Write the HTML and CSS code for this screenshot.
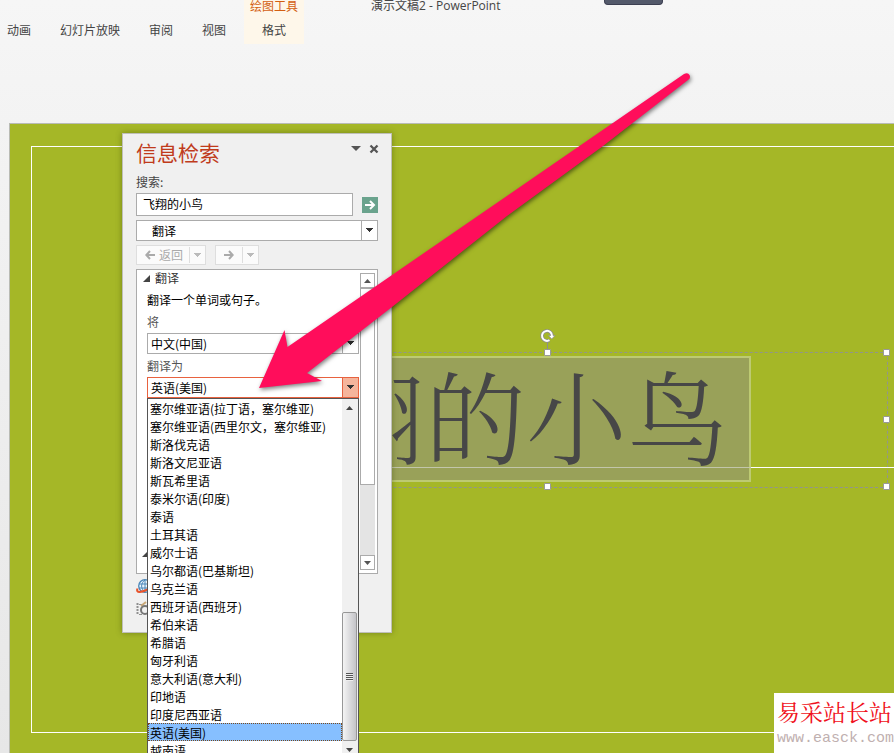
FILE: index.html
```html
<!DOCTYPE html>
<html lang="zh-CN">
<head>
<meta charset="utf-8">
<title>演示文稿2 - PowerPoint</title>
<link rel="stylesheet" href="styles.css">
</head>
<body>
<div class="app">
  <header class="ribbon">
    <nav class="tabs">
      <a href="#animations">动画</a>
      <a href="#slideshow">幻灯片放映</a>
      <a href="#review">审阅</a>
      <a href="#view">视图</a>
    </nav>
    <div class="context-tabs">
      <span class="context-title">绘图工具</span>
      <a href="#format">格式</a>
    </div>
    <div class="window-title">演示文稿2 - PowerPoint</div>
    <div class="window-grip"></div>
  </header>

  <main class="workspace">
    <section class="slide">
      <div class="slide-frame"></div>
      <div class="text-box">
        <div class="text-shape">飞翔的小鸟</div>
        <div class="rule"></div>
        <i class="handle top"></i><i class="handle corner-top"></i><i class="handle side"></i>
        <i class="handle corner-bottom"></i><i class="handle bottom"></i>
        <svg class="rotate" width="16" height="20" viewBox="0 0 16 20">
          <path d="M7.500 13V20" stroke="#8d8d8d"/>
          <path d="M9.500 11.200A5 5 0 1 1 12 6.500" fill="none" stroke="#8d8d8d" stroke-width="3.400"/>
          <path d="M8.500 6.500h6.500l-3.300 3.500z" fill="#fff" stroke="#8d8d8d" stroke-width=".7"/>
          <path d="M9.500 11.200A5 5 0 1 1 12 7" fill="none" stroke="#fff" stroke-width="2"/>
        </svg>
      </div>
    </section>

    <aside class="pane">
      <div class="pane-head">
        <h1>信息检索</h1>
        <button class="icon-button" aria-label="选项"><svg width="10" height="6" viewBox="0 0 10 6"><path d="M0 0h10L5 5z" fill="#555"/></svg></button>
        <button class="icon-button" aria-label="关闭"><svg width="10" height="10" viewBox="0 0 10 10"><path d="M1.500 1.500l7 7M8.500 1.500l-7 7" stroke="#555" stroke-width="2.300"/></svg></button>
      </div>
      <label class="search-label" for="query">搜索:</label>
      <div class="search-row">
        <input id="query" type="text" value="飞翔的小鸟">
        <button class="go" aria-label="开始搜索"><svg width="16" height="16" viewBox="0 0 16 16"><path d="M3 8h9M8 4l4 4-4 4" fill="none" stroke="#fff" stroke-width="2"/></svg></button>
      </div>
      <div class="combo service">
        <select aria-label="服务"><option>翻译</option></select>
      </div>
      <div class="history">
        <button class="split back" disabled><svg width="10" height="10" viewBox="0 0 10 10"><path d="M10 5H1.500M5 1L1.300 5 5 9" fill="none" stroke="#aaa" stroke-width="2"/></svg><span>返回</span><i class="split-arrow"></i></button>
        <button class="split forward" aria-label="前进" disabled><svg width="10" height="10" viewBox="0 0 10 10"><path d="M0 5h8.500M5 1l3.700 4L5 9" fill="none" stroke="#aaa" stroke-width="2"/></svg><i class="split-arrow"></i></button>
      </div>

      <div class="results">
        <div class="results-body">
          <h2><svg width="7" height="7" viewBox="0 0 7 7"><path d="M7 0v7H0z" fill="#444"/></svg>翻译</h2>
          <p>翻译一个单词或句子。</p>
          <label for="from">将</label>
          <div class="combo"><select id="from"><option>中文(中国)</option></select></div>
          <label for="to">翻译为</label>
          <div class="combo active">
            <select id="to"><option>英语(美国)</option></select>
            <div class="menu">
              <ul role="listbox" aria-label="翻译为">
                <li role="option">塞尔维亚语(拉丁语，塞尔维亚)</li>
                <li role="option">塞尔维亚语(西里尔文，塞尔维亚)</li>
                <li role="option">斯洛伐克语</li>
                <li role="option">斯洛文尼亚语</li>
                <li role="option">斯瓦希里语</li>
                <li role="option">泰米尔语(印度)</li>
                <li role="option">泰语</li>
                <li role="option">土耳其语</li>
                <li role="option">威尔士语</li>
                <li role="option">乌尔都语(巴基斯坦)</li>
                <li role="option">乌克兰语</li>
                <li role="option">西班牙语(西班牙)</li>
                <li role="option">希伯来语</li>
                <li role="option">希腊语</li>
                <li role="option">匈牙利语</li>
                <li role="option">意大利语(意大利)</li>
                <li role="option">印地语</li>
                <li role="option">印度尼西亚语</li>
                <li role="option" aria-selected="true">英语(美国)</li>
                <li role="option">越南语</li>
              </ul>
              <div class="menu-scroll">
                <svg width="7" height="4" viewBox="0 0 7 4"><path d="M0 4L3.500 0 7 4z" fill="#444"/></svg>
                <div class="menu-thumb"><i></i></div>
                <svg width="7" height="4" viewBox="0 0 7 4"><path d="M0 0h7L3.500 4z" fill="#444"/></svg>
              </div>
            </div>
          </div>
          <svg class="next-section" width="7" height="7" viewBox="0 0 7 7"><path d="M7 0v7H0z" fill="#444"/></svg>
        </div>
        <div class="scrollbar">
          <button aria-label="向上"><svg width="7" height="4" viewBox="0 0 7 4"><path d="M0 4L3.500 0 7 4z" fill="#555"/></svg></button>
          <div class="thumb"></div>
          <button class="down" aria-label="向下"><svg width="7" height="4" viewBox="0 0 7 4"><path d="M0 0h7L3.500 4z" fill="#555"/></svg></button>
        </div>
      </div>
      <div class="pane-links">
        <svg width="16" height="16" viewBox="0 0 16 16" fill="none"><circle cx="9" cy="7" r="6.300" fill="#eaf4fb" stroke="#4a86b8" stroke-width="1.300"/><path d="M3 5h12M3 9h12M9 1v12M9 1C4.500 4 4.500 10 9 13" stroke="#4a86b8"/><path d="M1.500 9.500c-2 5 4 4 11 .5" stroke="#e8532b" stroke-width="2"/></svg>
        <svg width="16" height="16" viewBox="0 0 16 16" fill="none" stroke="#909090"><path d="M1.500 2v12" stroke-width="2" stroke-dasharray="2 1"/><path d="M3 3.500h3M3 13.500h3" /><path d="M5 5l5-4" stroke="#c9a878" stroke-width="2"/><circle cx="9" cy="9" r="4" stroke="#777" stroke-width="2"/></svg>
      </div>
    </aside>
  </main>

  <svg class="pointer" width="440" height="325" viewBox="0 0 440 325">
    <path d="M4 318L29.500 260 32.500 277 429 4Q433 2 434.500 5T433 10L348 76 252 146 137 237 52 303 67 311z" fill="#ff0d5b"/>
  </svg>
  <div class="watermark"><strong>易采站长站</strong><span>www.easck.com</span></div>
</div>
</body>
</html>
```
FILE: styles.css
```css
*, *::after { box-sizing: border-box; }
body {
  margin: 0;
  font: 12px/18px "Noto Sans CJK SC", sans-serif;
  color: #000;
}
.app {
  position: relative;
  display: flex;
  flex-direction: column;
  height: 100vh;
  overflow: hidden;
  background: linear-gradient(#f6f6f6, #f3f3f3 123px, #e7e7e7);
}
a { color: inherit; text-decoration: none; }
h1, h2, p, ul { margin: 0; padding: 0; font-weight: normal; }
button, input, select { font: inherit; margin: 0; padding: 0; border-radius: 0; }
svg { display: block; flex: none; }

/* Ribbon */
.ribbon {
  flex: none;
  display: flex;
  align-items: flex-start;
  height: 123px;
  color: #444;
  white-space: nowrap;
}
.tabs { display: flex; gap: 29px; padding: 21px 18px 0 7px; }
.context-tabs {
  display: flex;
  flex-direction: column;
  align-items: center;
  gap: 6px;
  width: 60px;
  height: 44px;
  margin-right: 67px;
  background: #fef7ea;
}
.context-title { margin-top: -3px; color: #d35f12; }
.window-title { margin-top: -3px; font-family: "Open Sans", "Noto Sans CJK SC", sans-serif; }
.window-grip {
  width: 59px;
  height: 5px;
  margin-left: 103px;
  border: 1px solid #3d4052;
  border-top: 0;
  border-radius: 0 0 4px 4px;
  background: #545a6b;
}

/* Slide canvas */
.workspace { position: relative; flex: 1; min-height: 0; padding-left: 9px; }
.slide {
  position: relative;
  height: 100%;
  border: solid #b9bbb4;
  border-width: 1px 0 0 1px;
  background: #a5b727;
}
.slide-frame {
  position: absolute;
  left: 21px;
  right: 0;
  top: 22px;
  height: 587px;
  border: 1px solid #fff;
  border-right: 0;
}
.text-box {
  position: absolute;
  left: 198px;
  top: 228px;
  width: 680px;
  height: 136px;
  border: 1px dashed #92958b;
}
.text-shape {
  width: 542px;
  height: 126px;
  margin-top: 3px;
  padding-left: 12px;
  border: 2px solid #bdca73;
  background: #99a159;
  color: #474747;
  font: 101px/111px "Noto Serif CJK SC", "Noto Sans CJK SC", serif;
  font-weight: 300;
  white-space: nowrap;
}
.rule {
  position: absolute;
  left: 0;
  right: -10px;
  top: 114px;
  height: 1px;
  background: linear-gradient(90deg, #c2c6aa 542px, #fff 542px);
}
.handle {
  position: absolute;
  width: 7px;
  height: 7px;
  border: 1px solid #999;
  border-radius: 1px;
  background: #fff;
}
.handle.top { left: 335px; top: -4px; }
.handle.bottom { left: 335px; bottom: -3px; }
.handle.corner-top { right: -3px; top: -4px; }
.handle.corner-bottom { right: -3px; bottom: -3px; }
.handle.side { right: -3px; top: 63px; }
.rotate { position: absolute; left: 331px; top: -24px; }

/* Research pane */
.pane {
  position: absolute;
  left: 122px;
  top: 10px;
  width: 270px;
  height: 500px;
  padding: 5px 13px;
  border: 1px solid #bfbfb9;
  background: #f0f0f0;
  box-shadow: 0 0 6px rgba(60, 70, 0, .45);
}
.pane-head { display: flex; align-items: center; height: 28px; }
.pane-head h1 { flex: 1; color: #c03b1c; font-size: 21px; line-height: 26px; padding-bottom: 3px; }
.icon-button {
  display: grid;
  place-items: center;
  width: 18px;
  height: 18px;
  margin-top: -8px;
  border: 0;
  background: none;
}
.icon-button:last-child { margin-right: -5px; }
.search-label { display: block; margin: 6px 0 2px; color: #444; }
.search-row { display: flex; align-items: center; gap: 9px; margin-bottom: 4px; }
.search-row input {
  flex: 1;
  min-width: 0;
  height: 23px;
  padding: 0 6px 2px;
  border: 1px solid #ababab;
  background: #fff;
}
.go { width: 16px; height: 16px; border: 0; background: #6aa38d; }
.combo { position: relative; height: 21px; border: 1px solid #ababab; background: #fff; }
.combo select {
  display: block;
  width: 100%;
  height: 100%;
  padding-left: 3px;
  border: 0;
  background: none;
  color: #000;
  appearance: none;
}
.combo::after {
  content: "";
  position: absolute;
  top: 0;
  right: 0;
  width: 16px;
  height: 100%;
  border-left: 1px solid #ababab;
  background: linear-gradient(#333, #333) center 7px / 7px 1px no-repeat,
    linear-gradient(#333, #333) center 8px / 5px 1px no-repeat,
    linear-gradient(#333, #333) center 9px / 3px 1px no-repeat,
    linear-gradient(#333, #333) center 10px / 1px 1px no-repeat;
  pointer-events: none;
}
.combo.service select { padding-left: 15px; }
.combo.active { border-color: #e8623f; }
.combo.active::after { border-color: #e8623f; background-color: #f5b59c; }
.history { display: flex; gap: 9px; margin: 4px 0; }
.split {
  display: flex;
  align-items: center;
  height: 20px;
  padding-left: 8px;
  border: 1px solid #dedede;
  background: #fbfbfb;
  color: #aaa;
}
.back { width: 70px; }
.forward { width: 44px; }
.back span { margin-left: 4px; line-height: 18px; }
.split-arrow {
  width: 16px;
  height: 16px;
  margin-left: auto;
  border-left: 1px solid #dedede;
  background: linear-gradient(#bbb, #bbb) center 6px / 7px 1px no-repeat,
    linear-gradient(#bbb, #bbb) center 7px / 5px 1px no-repeat,
    linear-gradient(#bbb, #bbb) center 8px / 3px 1px no-repeat,
    linear-gradient(#bbb, #bbb) center 9px / 1px 1px no-repeat;
}
.results {
  display: flex;
  height: 305px;
  border: 1px solid #ababab;
  background: #fff;
}
.results-body { flex: 1; min-width: 0; padding-left: 10px; color: #555; }
.results h2 {
  display: flex;
  align-items: center;
  gap: 5px;
  margin-left: -4px;
  color: #333;
  font-size: 12px;
  line-height: 16px;
}
.results p { margin: 5px 0 4px; color: #000; }
.results label { display: block; line-height: 18px; margin-bottom: 2px; }
.results .combo { width: 212px; }
.results .combo + label { margin-top: 3px; }
.next-section { margin: 152px 0 0 -5px; }
.scrollbar {
  display: flex;
  flex-direction: column;
  width: 15px;
  margin: 3px 2px 3px 0;
  background: #e4e4e4;
}
.scrollbar button {
  display: grid;
  place-items: center;
  width: 15px;
  height: 15px;
  border: 1px solid #ababab;
  background: #fff;
}
.scrollbar .down { margin-top: auto; }
.thumb { height: 197px; border: 1px solid #ababab; background: #fff; }
.pane-links { display: flex; flex-direction: column; gap: 6px; padding-top: 5px; }

/* Open language list */
.menu {
  position: absolute;
  z-index: 2;
  left: -1px;
  top: 20px;
  display: flex;
  width: 212px;
  height: 361px;
  overflow: hidden;
  border: 1px solid #555;
  background: #fff;
  color: #000;
}
.menu ul { flex: 1; list-style: none; white-space: nowrap; }
.menu li { height: 18px; padding-left: 2px; line-height: 20px; }
.menu li[aria-selected] { background: #86bfff; outline: 1px dotted #7a4a1c; outline-offset: -1px; }
.menu-scroll {
  display: flex;
  flex-direction: column;
  align-items: center;
  width: 16px;
  padding: 7px 1px 6px 0;
  background: #f0f0f0;
}
.menu-thumb {
  display: grid;
  place-items: center;
  width: 15px;
  height: 129px;
  margin: auto 0 7px;
  border: 1px solid #979797;
  border-radius: 2px;
  background: linear-gradient(90deg, #f4f4f4, #dcdcde 50%, #c4c4c8);
}
.menu-thumb i { width: 7px; height: 8px; background: repeating-linear-gradient(#555 0 1px, #eee 1px 2px); }

/* Overlays */
.pointer {
  position: absolute;
  left: 255px;
  top: 70px;
  z-index: 3;
  filter: drop-shadow(1px 2px 2px rgba(0, 0, 0, .5));
  pointer-events: none;
}
.watermark {
  position: absolute;
  right: 0;
  bottom: 0;
  z-index: 4;
  width: 120px;
  height: 60px;
  padding: 4px 0 0 3px;
  background: #fff;
  white-space: nowrap;
}
.watermark strong {
  display: block;
  color: #f01020;
  font: 23px/30px "Noto Serif CJK SC", "Noto Sans CJK SC", serif;
}
.watermark span { display: block; color: #bfb0b0; font: 15px/24px "Liberation Mono", monospace; }
```
